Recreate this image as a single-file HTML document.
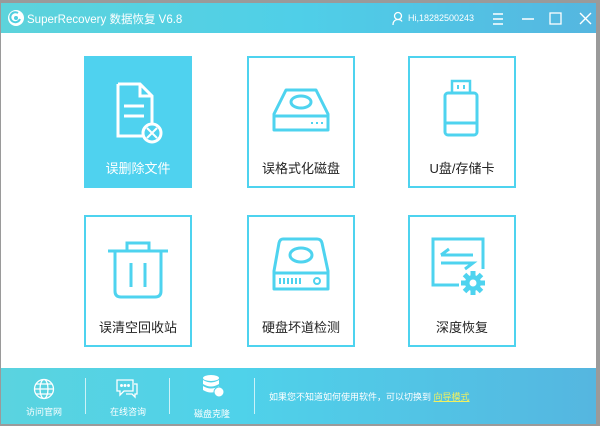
<!DOCTYPE html>
<html><head><meta charset="utf-8"><style>
*{margin:0;padding:0;box-sizing:border-box}
body{width:600px;height:426px;background:#9a9a9a;position:relative;overflow:hidden;font-family:"Liberation Sans","Noto Sans CJK SC",sans-serif}
.win{position:absolute;left:1px;top:3px;width:595px;height:421px;background:#fff}
.title{position:absolute;left:0;top:0;width:595px;height:30px;background:linear-gradient(90deg,#5dd3db,#4fcfe8 50%,#55b6e0);color:#fff}
.card{position:absolute;width:108px;height:132px;border:2px solid #4ed3ef;background:#fff;text-align:center;font-size:13px;color:#222}
.card .lbl{position:absolute;left:0;right:0;top:100px}
.card svg{position:absolute;left:50%;transform:translateX(-50%)}
.foot{position:absolute;left:0;top:365px;width:595px;height:56px;background:linear-gradient(90deg,#5ad3df,#4fd2ea 40%,#55b6e0);color:#fff;font-size:9px}
.sep{position:absolute;top:10px;width:1px;height:36px;background:rgba(255,255,255,.7)}
</style></head><body>
<div class="win">
<div class="title">
<svg style="position:absolute;left:6px;top:6px" width="18" height="18" viewBox="0 0 18 18"><circle cx="9" cy="9" r="8" fill="#fff"/><path d="M11 4a5 5 0 1 0 2 6" stroke="#4fcfe0" stroke-width="2" fill="none"/><circle cx="9" cy="9" r="2" fill="#4fcfe0"/></svg>
<div style="position:absolute;left:26px;top:8px;font-size:11.5px">SuperRecovery 数据恢复 V6.8</div>
<svg style="position:absolute;left:391px;top:8px" width="14" height="15" viewBox="0 0 14 15"><circle cx="6" cy="5" r="3.5" stroke="#fff" stroke-width="1.3" fill="none"/><path d="M1 14c0-4 2.5-5.5 5-5.5s3.5 1 4 2" stroke="#fff" stroke-width="1.3" fill="none"/></svg>
<div style="position:absolute;left:407px;top:10px;font-size:9px">Hi,18282500243</div>
<svg style="position:absolute;left:490px;top:8px" width="105" height="16" viewBox="0 0 105 16"><path d="M2 3h10M2 8h10M2 13h10" stroke="#fff" stroke-width="1.5"/><path d="M31 8h12" stroke="#fff" stroke-width="1.5"/><rect x="59" y="2" width="11" height="11" stroke="#fff" stroke-width="1.3" fill="none"/><path d="M89 2l11 11M100 2l-11 11" stroke="#fff" stroke-width="1.4"/></svg>
</div>

<div class="card" style="left:83px;top:53px;background:#4fd2ef;border-color:#4fd2ef;color:#fff">
<svg style="top:22px" width="60" height="66" viewBox="0 0 60 66"><path d="M10 4h22l12 12v28M10 4v52h26" stroke="#fff" stroke-width="3" fill="none"/><path d="M32 4v12h12" stroke="#fff" stroke-width="3" fill="none"/><path d="M16 26h20M16 36h20" stroke="#fff" stroke-width="3"/><circle cx="44" cy="53" r="9" stroke="#fff" stroke-width="3" fill="#4fd2ef"/><path d="M39 48l10 10M49 48l-10 10" stroke="#fff" stroke-width="2"/></svg>
<div class="lbl">误删除文件</div></div>

<div class="card" style="left:246px;top:53px">
<svg style="top:28px" width="60" height="50" viewBox="0 0 60 50"><path d="M15 4h30l12 24v16H3V28z" stroke="#4ed3ef" stroke-width="3" fill="none" stroke-linejoin="round"/><path d="M3 30h54" stroke="#4ed3ef" stroke-width="3"/><ellipse cx="30" cy="16" rx="10" ry="6" stroke="#4ed3ef" stroke-width="3" fill="none"/><path d="M40 37h2M45 37h2M50 37h2" stroke="#4ed3ef" stroke-width="2"/></svg>
<div class="lbl">误格式化磁盘</div></div>

<div class="card" style="left:407px;top:53px">
<svg style="top:20px" width="40" height="70" viewBox="0 0 40 70"><rect x="10" y="3" width="18" height="12" stroke="#4ed3ef" stroke-width="2.5" fill="none"/><path d="M16 7v4M22 7v4" stroke="#4ed3ef" stroke-width="2"/><rect x="3" y="15" width="32" height="42" rx="3" stroke="#4ed3ef" stroke-width="3" fill="none"/><path d="M3 45h32" stroke="#4ed3ef" stroke-width="3"/></svg>
<div class="lbl">U盘/存储卡</div></div>

<div class="card" style="left:83px;top:212px">
<svg style="top:18px" width="66" height="70" viewBox="0 0 66 70"><path d="M3 16h60" stroke="#4ed3ef" stroke-width="3"/><path d="M22 16V8h22v8" stroke="#4ed3ef" stroke-width="3" fill="none"/><path d="M10 16v40q0 6 6 6h34q6 0 6-6V16" stroke="#4ed3ef" stroke-width="3" fill="none"/><path d="M26 28v24M40 28v24" stroke="#4ed3ef" stroke-width="3"/></svg>
<div class="lbl">误清空回收站</div></div>

<div class="card" style="left:246px;top:212px">
<svg style="top:18px" width="60" height="64" viewBox="0 0 60 64"><path d="M12 4h34q4 0 5 4l6 28v18H3V36l5-28q1-4 4-4z" stroke="#4ed3ef" stroke-width="3" fill="none" stroke-linejoin="round"/><path d="M3 38h54" stroke="#4ed3ef" stroke-width="3"/><ellipse cx="30" cy="20" rx="11" ry="7" stroke="#4ed3ef" stroke-width="3" fill="none"/><path d="M9 43v6M13 43v6M17 43v6M21 43v6M25 43v6M29 43v6" stroke="#4ed3ef" stroke-width="2"/><circle cx="46" cy="46" r="3" stroke="#4ed3ef" stroke-width="2" fill="none"/></svg>
<div class="lbl">硬盘坏道检测</div></div>

<div class="card" style="left:407px;top:212px">
<svg style="top:18px" width="66" height="66" viewBox="0 0 66 66"><path d="M30 50H4V4h50v30" stroke="#4ed3ef" stroke-width="3" fill="none"/><path d="M12 20h32M20 14l-8 6M12 28h32l-8 6" stroke="#4ed3ef" stroke-width="3" fill="none"/><g transform="translate(44,48)" fill="#4ed3ef"><circle r="8"/><g id="t"><rect x="-2.5" y="-12" width="5" height="24"/><rect x="-12" y="-2.5" width="24" height="5"/></g><use href="#t" transform="rotate(45)"/><circle r="3.5" fill="#fff"/></g></svg>
<div class="lbl">深度恢复</div></div>

<div class="foot">
<svg style="position:absolute;left:32px;top:10px" width="22" height="22" viewBox="0 0 22 22" fill="none" stroke="#fff" stroke-width="1.3"><circle cx="11" cy="11" r="9.5"/><ellipse cx="11" cy="11" rx="4" ry="9.5"/><path d="M1.5 11h19M3 6h16M3 16h16"/></svg>
<div style="position:absolute;left:25px;top:37px">访问官网</div>
<div class="sep" style="left:84px"></div>
<svg style="position:absolute;left:114px;top:10px" width="24" height="22" viewBox="0 0 24 22" fill="none" stroke="#fff" stroke-width="1.3"><path d="M2 2h16v11H9l-4 4v-4H2z"/><path d="M19 6h3v10h-2v3l-3-3h-6"/><circle cx="6.5" cy="7.5" r=".8" fill="#fff"/><circle cx="10" cy="7.5" r=".8" fill="#fff"/><circle cx="13.5" cy="7.5" r=".8" fill="#fff"/></svg>
<div style="position:absolute;left:109px;top:37px">在线咨询</div>
<div class="sep" style="left:168px"></div>
<svg style="position:absolute;left:200px;top:6px" width="24" height="26" viewBox="0 0 24 26" fill="#fff"><ellipse cx="10" cy="4" rx="8" ry="3"/><path d="M2 6q8 5 16 0v4q-8 5-16 0z"/><path d="M2 12q8 5 16 0v4q-8 5-16 0z"/><circle cx="18" cy="18" r="5" stroke="#4fd2ea" stroke-width="1"/></svg>
<div style="position:absolute;left:193px;top:39px">磁盘克隆</div>
<div class="sep" style="left:253px"></div>
<div style="position:absolute;left:268px;top:22px">如果您不知道如何使用软件，可以切换到 <span style="color:#f0f060;text-decoration:underline">向导模式</span></div>
</div>
</div>
</body></html>
